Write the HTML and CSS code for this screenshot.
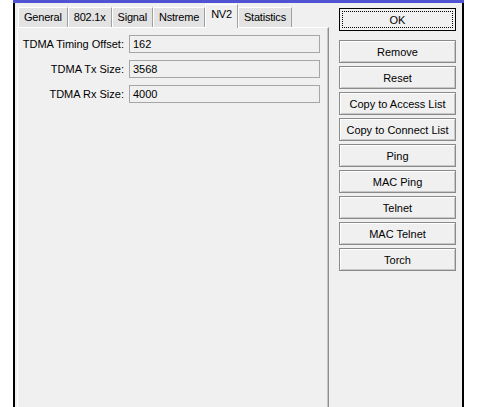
FILE: index.html
```html
<!DOCTYPE html>
<html lang="en">
<head>
  <meta charset="UTF-8" />
  <title>Wireless Interface - NV2</title>
  <link rel="stylesheet" href="styles.css">
</head>
<body>
  <div class="window">
    <div class="frame">
      <div class="left">
        <!-- tab strip -->
        <ul class="tabs">
          <li class="tab">General</li>
          <li class="tab">802.1x</li>
          <li class="tab">Signal</li>
          <li class="tab">Nstreme</li>
          <li class="tab active">NV2</li>
          <li class="tab">Statistics</li>
        </ul>
        <div class="panel">
          <div class="field">
            <label>TDMA Timing Offset:</label>
            <div class="input">162</div>
          </div>
          <div class="field">
            <label>TDMA Tx Size:</label>
            <div class="input">3568</div>
          </div>
          <div class="field">
            <label>TDMA Rx Size:</label>
            <div class="input">4000</div>
          </div>
        </div>
      </div>

      <!-- action buttons -->
      <div class="buttons">
        <button class="btn default">OK</button>
        <button class="btn first">Remove</button>
        <button class="btn">Reset</button>
        <button class="btn">Copy to Access List</button>
        <button class="btn">Copy to Connect List</button>
        <button class="btn">Ping</button>
        <button class="btn">MAC Ping</button>
        <button class="btn">Telnet</button>
        <button class="btn">MAC Telnet</button>
        <button class="btn">Torch</button>
      </div>
    </div>
  </div>
</body>
</html>
```

FILE: styles.css
```css
/* WinBox-style dialog */
* {
  margin: 0;
  padding: 0;
  box-sizing: border-box;
}
body {
  background: #fff;
  color: #000;
  font-family: 'Liberation Sans', Arial, sans-serif;
  font-size: 11px;
  overflow: hidden;
}
.window {
  margin-left: 13px;
  width: 451px;
  height: 407px;
  border-top: 3px solid #5151d3;
}
.frame {
  display: flex;
  height: 100%;
  background: #f0f0f0;
  border-left: 2px solid #000;
  border-right: 2px solid #000;
}
.left {
  display: flex;
  flex-direction: column;
  width: 314px;
  padding-top: 1px;
  padding-left: 2px;
}
.tabs {
  display: flex;
  align-items: flex-end;
  list-style: none;
  padding-left: 1px;
  height: 23px;
}
.tab {
  height: 20px;
  line-height: 19px;
  padding: 0 5px;
  background: #e3e3e3;
  border-top: 1px solid #fff;
  border-left: 1px solid #fff;
  border-right: 1px solid #a0a0a0;
  letter-spacing: -0.2px;
  white-space: nowrap;
}
.tab.active {
  height: 24px;
  line-height: 18px;
  margin-bottom: -1px;
  background: #f0f0f0;
  position: relative;
  z-index: 1;
}
.panel {
  flex: 1;
  border-top: 1px solid #fff;
  border-left: 1px solid #fff;
  border-right: 1px solid #8e8e8e;
  box-shadow: inset -1px 0 0 #c4c4c4;
  padding-top: 7px;
  display: flex;
  flex-direction: column;
  gap: 7px;
}
.field {
  display: flex;
  align-items: center;
  height: 18px;
}
.field label {
  width: 106px;
  text-align: right;
  margin-right: 5px;
}
.input {
  width: 191px;
  height: 18px;
  line-height: 16px;
  padding-left: 3px;
  border: 1px solid #a6a6a6;
  background: #f0f0f0;
}
.buttons {
  display: flex;
  flex-direction: column;
  gap: 3px;
  margin-left: 10px;
  padding-top: 5px;
}
.btn {
  width: 117px;
  height: 23px;
  font: inherit;
  color: #000;
  background: #f0f0f0;
  border: 1px solid #8a8a8a;
  box-shadow: inset 1px 1px 0 #fff, inset -1px -1px 0 #c8c8c8;
}
.btn.default {
  border-color: #000;
  box-shadow: none;
  outline: 1px dotted #000;
  outline-offset: -4px;
}
.btn.first {
  margin-top: 6px;
}
```
